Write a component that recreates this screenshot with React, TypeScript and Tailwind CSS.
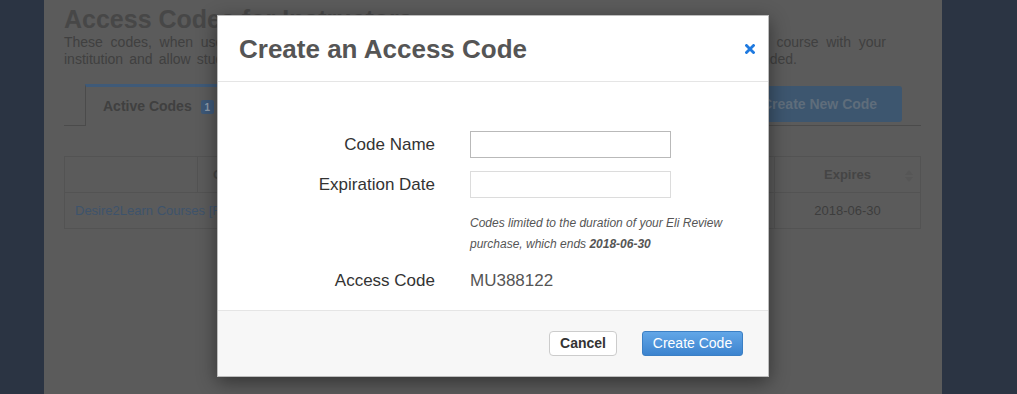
import React from "react";

function SortArrows() {
  return (
    <svg width="8" height="12" viewBox="0 0 8 12" className="absolute right-[7px] top-[13px]">
      <path d="M4 0 L8 5 L0 5 Z" fill="#565656" />
      <path d="M4 12 L8 7 L0 7 Z" fill="#565656" />
    </svg>
  );
}

function CloseIcon() {
  return (
    <svg width="10" height="10" viewBox="0 0 10 10">
      <path d="M1.5 1.5 L8.5 8.5 M8.5 1.5 L1.5 8.5" stroke="#1f7ae0" strokeWidth="2.8" strokeLinecap="square" />
    </svg>
  );
}

export default function App() {
  return (
    <div className="relative h-[394px] w-[1017px] overflow-hidden bg-[#2b3443] font-['Liberation_Sans',Arial,sans-serif]">
      <div className="flex h-full">
        <div className="w-[44px] shrink-0" />
        <main className="h-full w-[898px] shrink-0 bg-[#5b5b5b] pl-[20px] pr-[21px] pt-[4px]">
          <h1 className="text-[25px] font-bold leading-[30px] text-[#474747]">Access Codes for Instructors</h1>
          <div className="text-[14px] leading-[17px] text-[#404040]">
            <p className="w-[822px] text-justify [text-align-last:justify]">
              These codes, when used by students during registration, will automatically enroll them all into the correct course with your
            </p>
            <p className="w-[733px] text-justify [text-align-last:justify]">
              institution and allow students to skip the purchase step for the course until the code has expired or is rescinded.
            </p>
          </div>

          <div className="mt-[16px] flex items-end border-b border-[#4b4b4b]">
            <div className="w-[21px] shrink-0" />
            <div className="-mb-px flex h-[42px] w-[250px] items-start gap-[9px] border-x border-t-[3px] border-x-[#4b4b4b] border-t-[#3f5a78] bg-[#5b5b5b] pl-[17px] pt-[11px]">
              <span className="text-[14px] font-bold leading-[17px] text-[#404040]">Active Codes</span>
              <span className="mt-[2px] flex h-[14px] w-[13px] items-center justify-center rounded-[2px] bg-[#3d5878] text-[10px] font-bold text-[#8f9cab]">
                1
              </span>
            </div>
            <div className="flex-1" />
            <button className="mb-[3px] mr-[19px] h-[36px] w-[165px] rounded-[3px] bg-[#3d566f] pl-[25px] text-left text-[14px] font-bold text-[#5f6d7b]">
              Create New Code
            </button>
          </div>

          <div className="mt-[30px] border border-[#535353] text-[13px]">
            <div className="flex h-[36px] border-b border-[#535353] font-bold text-[#454545]">
              <div className="w-[133px] border-r border-[#535353]" />
              <div className="flex flex-1 items-center pl-[15px]">Course Code</div>
              <div className="relative flex w-[146px] items-center justify-center border-l border-[#535353]">
                Expires
                <SortArrows />
              </div>
            </div>
            <div className="flex h-[35px] text-[#3d3d3d]">
              <div className="flex flex-1 items-center pl-[10px] text-[#3e536b]">Desire2Learn Courses [Fall 2017]</div>
              <div className="flex w-[146px] items-center justify-center border-l border-[#535353]">2018-06-30</div>
            </div>
          </div>
        </main>
      </div>

      <div className="absolute left-[217px] top-[15px] flex h-[362px] w-[552px] flex-col border border-[#bdbdbd] bg-white shadow-[0_5px_18px_rgba(0,0,0,0.45)]">
        <div className="flex h-[66px] shrink-0 items-center justify-between border-b border-[#e5e5e5] pl-[21px] pr-[13px]">
          <h2 className="text-[26px] font-bold leading-[30px] text-[#555555]">Create an Access Code</h2>
          <CloseIcon />
        </div>

        <div className="flex-1 pt-[49px] text-[17px] leading-[20px]">
          <div className="flex items-center gap-[35px]">
            <label className="w-[217px] text-right text-[#333333]">Code Name</label>
            <input className="h-[27px] w-[201px] border border-[#b9b9b9] bg-white px-[6px] text-[14px] outline-none" />
          </div>
          <div className="mt-[13px] flex items-center gap-[35px]">
            <label className="w-[217px] text-right text-[#333333]">Expiration Date</label>
            <input className="h-[27px] w-[201px] border border-[#dcdcdc] bg-white px-[6px] text-[14px] outline-none" />
          </div>
          <div className="mt-[15px] flex gap-[35px]">
            <div className="w-[217px]" />
            <p className="text-[12px] italic leading-[21px] text-[#555555]">
              Codes limited to the duration of your Eli Review
              <br />
              purchase, which ends <b>2018-06-30</b>
            </p>
          </div>
          <div className="mt-[16px] flex gap-[35px]">
            <span className="w-[217px] text-right text-[#333333]">Access Code</span>
            <span className="text-[#555555]">MU388122</span>
          </div>
        </div>

        <div className="flex h-[66px] shrink-0 items-center justify-end gap-[25px] border-t border-[#e5e5e5] bg-[#f7f7f7] pr-[25px]">
          <button className="h-[25px] w-[68px] rounded-[4px] border border-[#cccccc] bg-white text-[14px] font-bold text-[#333333]">
            Cancel
          </button>
          <button className="h-[25px] w-[101px] rounded-[3px] border border-[#3b7fc4] bg-gradient-to-b from-[#62a6e7] to-[#3c84cf] text-[14px] text-white">
            Create Code
          </button>
        </div>
      </div>
    </div>
  );
}
